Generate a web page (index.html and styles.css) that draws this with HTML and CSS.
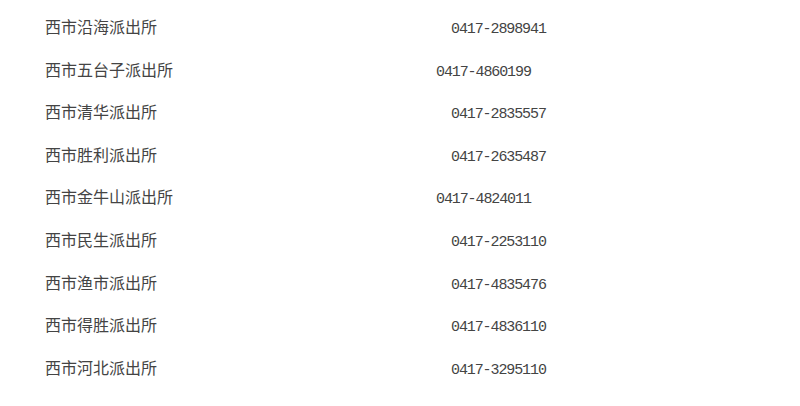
FILE: index.html
```html
<!DOCTYPE html>
<html lang="zh-CN">
<head>
    <meta charset="UTF-8">
    <title>派出所电话</title>
    <link rel="stylesheet" href="styles.css">
</head>
<body>
    <ul class="station-list">
        <li class="station"><span class="name">西市沿海派出所</span><span class="phone">0417-2898941</span></li>
        <li class="station"><span class="name">西市五台子派出所</span><span class="phone near">0417-4860199</span></li>
        <li class="station"><span class="name">西市清华派出所</span><span class="phone">0417-2835557</span></li>
        <li class="station"><span class="name">西市胜利派出所</span><span class="phone">0417-2635487</span></li>
        <li class="station"><span class="name">西市金牛山派出所</span><span class="phone near">0417-4824011</span></li>
        <li class="station"><span class="name">西市民生派出所</span><span class="phone">0417-2253110</span></li>
        <li class="station"><span class="name">西市渔市派出所</span><span class="phone">0417-4835476</span></li>
        <li class="station"><span class="name">西市得胜派出所</span><span class="phone">0417-4836110</span></li>
        <li class="station"><span class="name">西市河北派出所</span><span class="phone">0417-3295110</span></li>
    </ul>
</body>
</html>
```

FILE: styles.css
```css
body {
    margin: 0;
    background: #FFFFFF;
    color: #444;
    font-family: "Noto Sans CJK SC", sans-serif;
}

.station-list {
    list-style: none;
    margin: 0;
    padding: 5px 0 0 45px;
}

.station {
    display: flex;
    align-items: baseline;
    height: 42.6px;
    line-height: 42.6px;
}

.name {
    width: 391px;
    font-size: 16px;
}

.phone {
    padding-left: 15px;
    font-family: "Liberation Mono", monospace;
    font-size: 15px;
    letter-spacing: -1.1px;
}

.phone.near {
    padding-left: 0;
}
```
